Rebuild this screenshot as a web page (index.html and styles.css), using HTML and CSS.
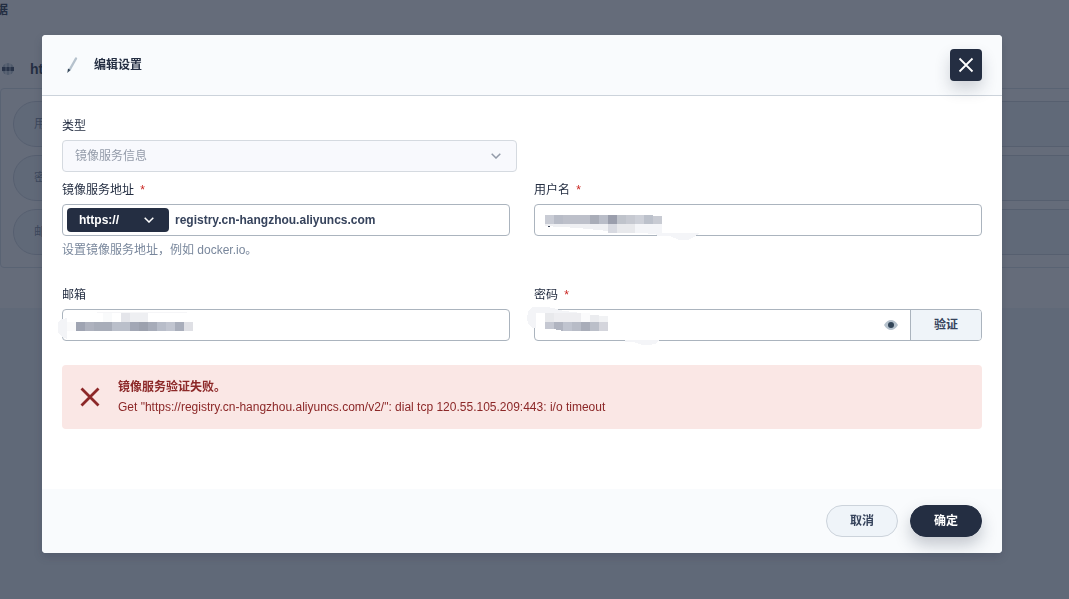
FILE: index.html
```
<!DOCTYPE html>
<html lang="zh-CN">
<head>
    <meta charset="UTF-8">
    <meta name="viewport" content="width=device-width, initial-scale=1.0">
    <title>编辑设置</title>
    <link rel="stylesheet" href="styles.css">
</head>
<body>
    <main class="page">
        <h1 class="page-title">据</h1>
        <section class="secret">
            <div class="secret-head">
                <svg class="globe" width="12" height="12" viewBox="0 0 12 12">
                    <circle cx="6" cy="6" r="6" fill="#b6c2cd"/>
                    <path d="M4 0v12M8 0v12" stroke="#fff" stroke-width="1"/>
                    <path d="M0 4h12v4H0z" fill="#36435c"/>
                    <path d="M4 4v4M8 4v4" stroke="#b6c2cd" stroke-width="1"/>
                </svg>
                <span>htt</span>
            </div>
            <ul class="secret-list">
                <li>用</li>
                <li>密</li>
                <li>邮</li>
            </ul>
        </section>
    </main>

    <div class="overlay">
        <form class="modal" role="dialog" aria-labelledby="modalTitle">
            <header class="modal-header">
                <svg class="pen" width="16" height="20" viewBox="0 0 16 20">
                    <path d="M14 3.500L7.500 15" stroke="#b6c2cd" stroke-width="2.400" stroke-linecap="round"/>
                    <path d="M6 13.500l2.400 1.400L5.300 18z" fill="#324558"/>
                </svg>
                <h2 id="modalTitle">编辑设置</h2>
                <button type="button" class="close" aria-label="关闭">
                    <svg width="16" height="16" viewBox="0 0 16 16">
                        <path d="M1.500 1.500l13 13M14.500 1.500l-13 13" stroke="#fff" stroke-width="1.800"/>
                    </svg>
                </button>
            </header>

            <div class="modal-body">
                <div class="field type-field">
                    <label for="type">类型</label>
                    <div class="select">
                        <select id="type" disabled>
                            <option>镜像服务信息</option>
                        </select>
                        <svg class="arrow" width="10" height="6" viewBox="0 0 10 6">
                            <path d="M.7.7L5 5 9.300.7" fill="none" stroke="#939ba9" stroke-width="1.500"/>
                        </svg>
                    </div>
                </div>

                <div class="grid">
                    <div class="field">
                        <label for="address">镜像服务地址 <span class="required">*</span></label>
                        <div class="control">
                            <div class="select protocol">
                                <select aria-label="协议">
                                    <option>https://</option>
                                    <option>http://</option>
                                </select>
                                <svg class="arrow" width="10" height="6" viewBox="0 0 10 6">
                                    <path d="M.7.7L5 5 9.300.7" fill="none" stroke="#fff" stroke-width="1.500"/>
                                </svg>
                            </div>
                            <input type="text" id="address" value="registry.cn-hangzhou.aliyuncs.com">
                        </div>
                        <p class="hint">设置镜像服务地址，例如 docker.io。</p>
                    </div>

                    <div class="field">
                        <label for="username">用户名 <span class="required">*</span></label>
                        <div class="control">
                            <input type="text" id="username">
                            <svg class="mask" width="180" height="44" viewBox="0 0 180 44" shape-rendering="crispEdges">
                                <path d="M19 25h117v9h-34L52 29l-33-2z" fill="#eff0f3"/>
                                <path d="M82 25h9v9h-9z" fill="#d8dae1"/>
                                <path d="M91 25h18v9H91z" fill="#e8e9ec"/>
                                <path d="M109 25h27v9h-27z" fill="#f4f5f8"/>
                                <path d="M114 34h60l-6 4-6 3h-9l-9-4h-12l-3-2z" fill="#f4f5f8"/>
                                <path d="M19 16h9v9h-9z" fill="#c9ccd5"/>
                                <path d="M28 16h9v9h-9z" fill="#b8bcc7"/>
                                <path d="M37 16h36v9H37z" fill="#bdc0ca"/>
                                <path d="M64 16h9v9h-9z" fill="#a9adb8"/>
                                <path d="M73 16h9v9h-9z" fill="#b9bdc8"/>
                                <path d="M82 16h9v9h-9z" fill="#9a9eac"/>
                                <path d="M91 16h9v9h-9z" fill="#bfc3cb"/>
                                <path d="M100 16h9v9h-9z" fill="#c6c9d1"/>
                                <path d="M109 16h9v9h-9z" fill="#cdd0d8"/>
                                <path d="M118 16h9v9h-9z" fill="#bcc1cb"/>
                                <path d="M127 17h9v8h-9z" fill="#c8cbd3"/>
                                <path d="M22 27h2v1h-2z" fill="#3b4559"/>
                            </svg>
                        </div>
                    </div>

                    <div class="field">
                        <label for="email">邮箱</label>
                        <div class="control">
                            <input type="text" id="email">
                            <svg class="mask" width="180" height="44" viewBox="0 0 180 44" shape-rendering="crispEdges">
                                <path d="M9 14v21l-5-2-4-4V18l4-3z" fill="#f3f4f7"/>
                                <path d="M9 18h9v9H9z" fill="#fafafb"/>
                                <path d="M39 8h90v1H39z" fill="#f6f6f8"/>
                                <path d="M45 9h9v9h-9z" fill="#f9fafb"/>
                                <path d="M63 9h9v9h-9z" fill="#e4e5ea"/>
                                <path d="M72 9h18v9H72z" fill="#eeeff2"/>
                                <path d="M18 18h9v9h-9z" fill="#9fa4b2"/>
                                <path d="M27 18h9v9h-9z" fill="#aeb2be"/>
                                <path d="M36 18h18v9H36z" fill="#a8adb9"/>
                                <path d="M54 18h18v9H54z" fill="#babfca"/>
                                <path d="M72 18h9v9h-9z" fill="#a2a7b5"/>
                                <path d="M81 18h9v9h-9z" fill="#9ca1ae"/>
                                <path d="M90 18h9v9h-9z" fill="#a7acb9"/>
                                <path d="M99 18h9v9h-9z" fill="#b8bdc9"/>
                                <path d="M108 18h9v9h-9z" fill="#c1c5d0"/>
                                <path d="M117 18h9v9h-9z" fill="#a9aebb"/>
                                <path d="M126 18h9v9h-9z" fill="#dfe0e5"/>
                            </svg>
                        </div>
                    </div>

                    <div class="field">
                        <label for="password">密码 <span class="required">*</span></label>
                        <div class="control">
                            <input type="password" id="password">
                            <button type="button" class="eye" aria-label="显示密码">
                                <svg width="14" height="10" viewBox="0 0 14 10">
                                    <path d="M0 5C2 1.500 4.500 0 7 0s5 1.500 7 5c-2 3.500-4.500 5-7 5S2 8.500 0 5z" fill="#b6c2cd"/>
                                    <circle cx="7" cy="5" r="3" fill="#324558"/>
                                </svg>
                            </button>
                            <button type="button" class="verify">验证</button>
                            <svg class="mask" width="180" height="44" viewBox="0 0 180 44" shape-rendering="crispEdges">
                                <path d="M2 7l5-4h14l11 2v1l30 4v8H19V9h-9v15H7l-4-3-2-6z" fill="#f3f4f7"/>
                                <path d="M19 9h9v9h-9z" fill="#e8e9ec"/>
                                <path d="M28 9h27v9H28z" fill="#eeeef1"/>
                                <path d="M55 9h9v9h-9z" fill="#fbfbfc"/>
                                <path d="M64 11h9v7h-9z" fill="#ebecef"/>
                                <path d="M73 12h9v6h-9z" fill="#f1f2f4"/>
                                <path d="M19 18h9v7h-9z" fill="#c5c8d2"/>
                                <path d="M28 18h9v9l-9-2z" fill="#b0b4c0"/>
                                <path d="M37 18h9v9h-9z" fill="#c0c4cf"/>
                                <path d="M46 18h9v9h-9z" fill="#b8bcc7"/>
                                <path d="M55 18h9v9h-9z" fill="#a9adb9"/>
                                <path d="M64 18h9v9h-9z" fill="#bbbfc9"/>
                                <path d="M73 18h9v9h-9z" fill="#d4d5dc"/>
                                <path d="M99 36h34l-4 4-6 1h-7l-8-3h-9z" fill="#f4f5f8"/>
                            </svg>
                        </div>
                    </div>
                </div>

                <div class="alert" role="alert">
                    <svg width="20" height="20" viewBox="0 0 20 20">
                        <path d="M1.500 1.500l17 17M18.500 1.500l-17 17" stroke="#8c2828" stroke-width="2.800"/>
                    </svg>
                    <div>
                        <strong>镜像服务验证失败。</strong>
                        <p>Get "https://registry.cn-hangzhou.aliyuncs.com/v2/": dial tcp 120.55.105.209:443: i/o timeout</p>
                    </div>
                </div>
            </div>

            <footer class="modal-footer">
                <button type="button" class="btn">取消</button>
                <button type="submit" class="btn btn-primary">确定</button>
            </footer>
        </form>
    </div>
</body>
</html>
```
FILE: styles.css
```
* {
    box-sizing: border-box;
}
body {
    margin: 0;
    background: #eff4f9;
    color: #242e42;
    font-family: "Liberation Sans", "Noto Sans CJK SC", sans-serif;
    font-size: 12px;
    line-height: 20px;
    overflow: hidden;
}
h1, h2, p, ul {
    margin: 0;
    padding: 0;
}
button, input, select {
    font: inherit;
    color: inherit;
}
svg {
    display: block;
}

/* page under the dialog */
.page {
    background: #fff;
    padding-bottom: 40px;
    margin-right: -60px;
}
.page-title {
    margin-left: -4px;
    font-size: 12px;
    padding-bottom: 22px;
}
.secret-head {
    display: flex;
    align-items: center;
    gap: 16px;
    height: 46px;
    padding: 8px 2px 0;
    font-size: 14px;
    font-weight: bold;
}
.secret-list {
    display: grid;
    gap: 8px;
    padding: 12px;
    border: 1px solid #d8dfe7;
    border-radius: 4px;
    list-style: none;
}
.secret-list li {
    height: 46px;
    padding: 12px 20px;
    border: 1px solid #ccd3db;
    border-radius: 23px;
    background: #eff4f9;
    color: #79879c;
}

.overlay {
    position: fixed;
    inset: 0;
    display: flex;
    align-items: flex-start;
    padding: 35px 67px 46px 42px;
    background: rgba(36, 46, 66, 0.7);
}
.modal {
    flex: 1;
    border-radius: 4px;
    background: #fff;
    box-shadow: 0 4px 8px rgba(36, 46, 66, 0.2);
}
.modal-header {
    display: flex;
    align-items: center;
    padding: 14px 20px;
    border-bottom: 1px solid #ccd3db;
    border-radius: 4px 4px 0 0;
    background: #f9fbfd;
}
.modal-header h2 {
    flex: 1;
    margin-left: 16px;
    font-size: 12px;
}
.close {
    display: grid;
    place-items: center;
    width: 32px;
    height: 32px;
    padding: 0;
    border: none;
    border-radius: 4px;
    background: #242e42;
    box-shadow: 0 8px 16px rgba(36, 46, 66, 0.2);
    cursor: pointer;
}

.modal-body {
    padding: 20px 20px 60px;
}
.grid {
    display: grid;
    grid-template-columns: 1fr 1fr;
    gap: 25px 24px;
    margin: 8px 0 24px;
}
.type-field {
    width: 50%;
    padding-right: 5px;
}
label {
    display: block;
    margin-bottom: 4px;
}
.required {
    margin-left: 3px;
    color: #ca2621;
}
.select {
    display: grid;
    align-items: center;
}
.select select, .select .arrow {
    grid-area: 1 / 1;
}
.select select {
    width: 100%;
    height: 32px;
    padding: 0 12px;
    border: 1px solid #d5dae0;
    border-radius: 4px;
    background: #f8f9fd;
    color: #939ba9;
    opacity: 1;
    appearance: none;
}
.select .arrow {
    justify-self: end;
    margin-right: 16px;
    pointer-events: none;
}
.select.protocol {
    width: 102px;
    margin-left: 4px;
}
.protocol select {
    height: 24px;
    border: none;
    background: #242e42;
    color: #fff;
    font-weight: bold;
}
.protocol .arrow {
    margin-right: 15px;
}
.control {
    position: relative;
    display: flex;
    align-items: center;
    height: 32px;
    border: 1px solid #abb4be;
    border-radius: 4px;
    background: #fff;
}
.control input {
    flex: 1;
    min-width: 0;
    height: 100%;
    padding: 0 6px;
    border: none;
    outline: none;
    background: none;
    color: #36435c;
    font-weight: bold;
}
/* smudge over the private values */
.mask {
    position: absolute;
    top: -6px;
    left: -9px;
    pointer-events: none;
}
#email + .mask {
    left: -5px;
}
.hint {
    margin-top: 4px;
    color: #79879c;
}
.eye {
    padding: 0 12px;
    border: none;
    background: none;
}
.verify {
    width: 71px;
    height: 100%;
    padding: 0;
    border: none;
    border-left: 1px solid #abb4be;
    border-radius: 0 3px 3px 0;
    background: #eff4f9;
    color: #36435c;
    font-weight: bold;
}

.alert {
    display: flex;
    align-items: center;
    gap: 18px;
    padding: 12px 18px;
    border-radius: 4px;
    background: #fae7e5;
    color: #8c2828;
}

.modal-footer {
    display: flex;
    justify-content: flex-end;
    gap: 12px;
    padding: 16px 20px;
    border-radius: 0 0 4px 4px;
    background: #f9fbfd;
}
.btn {
    width: 72px;
    height: 32px;
    padding: 0;
    border: 1px solid #ccd3db;
    border-radius: 16px;
    background: #eff4f9;
    color: #36435c;
    font-weight: bold;
    cursor: pointer;
}
.btn-primary {
    border-color: #242e42;
    background: #242e42;
    color: #fff;
    box-shadow: 0 8px 16px rgba(36, 46, 66, 0.25);
}
```
